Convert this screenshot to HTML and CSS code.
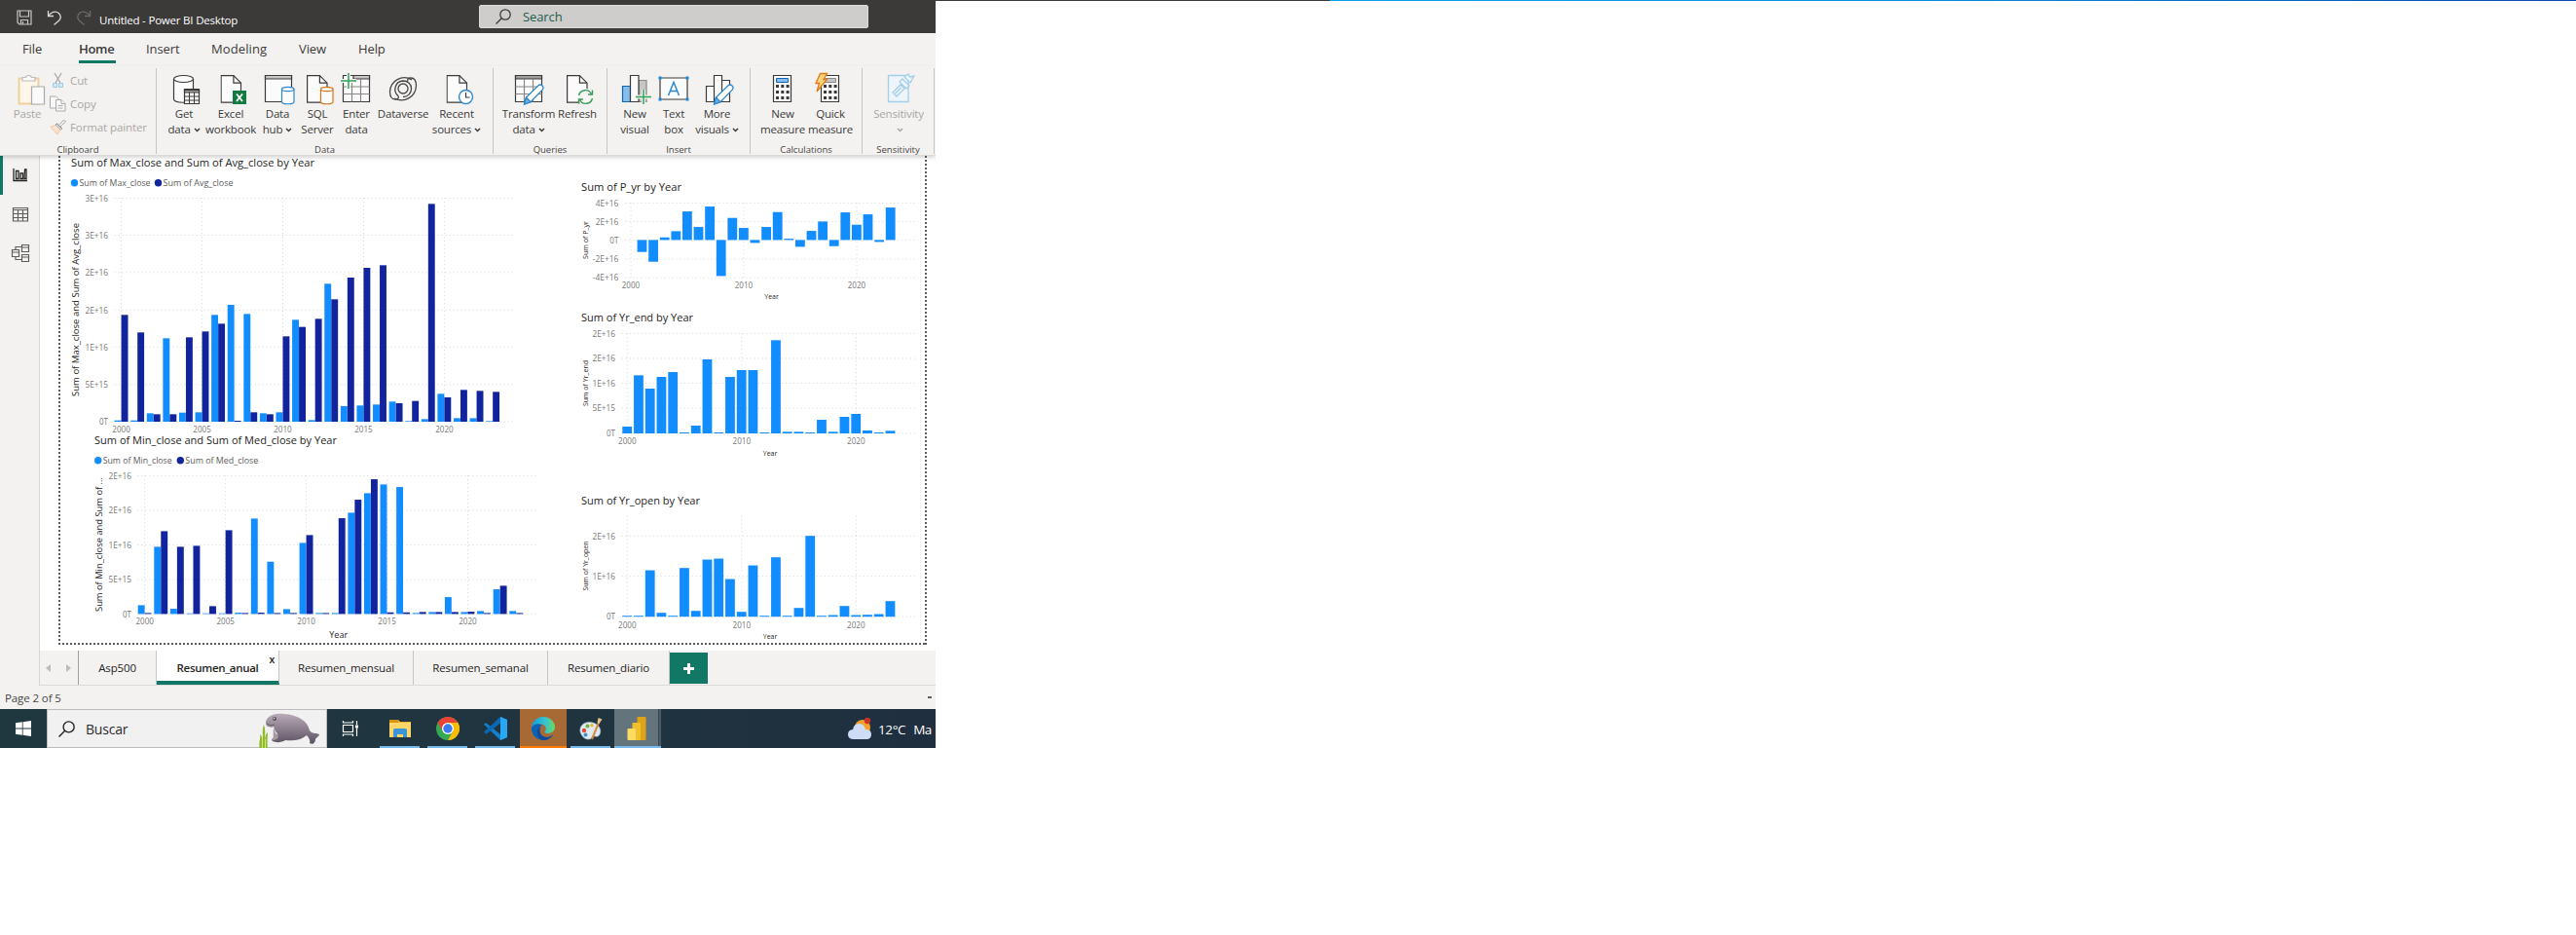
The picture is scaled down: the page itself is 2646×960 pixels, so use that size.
FILE: index.html
```html
<!DOCTYPE html>
<html lang="en">
<head>
<meta charset="utf-8">
<title>Untitled - Power BI Desktop</title>
<link rel="stylesheet" href="styles.css">
</head>
<body>
<div class="second-edge"><i class="edge-dark"></i><i class="edge-blue"></i></div>
<svg width="0" height="0" class="defs">
  <defs>
    <symbol id="chev" viewBox="0 0 7 5"><path d="M1 1l2.500 2.500L6 1" fill="none" stroke="currentColor" stroke-width="1.500"/></symbol>
    <symbol id="page" viewBox="0 0 22 29"><path d="M.6.6h12.800l7.600 7.600v19.900H.6z" fill="#fbfbfb" stroke="#3b3a39" stroke-width="1.200"/><path d="M13.400.6v7.600H21" fill="none" stroke="#3b3a39" stroke-width="1.200"/></symbol>
    <symbol id="pencil" viewBox="0 0 22 22"><path d="M1 21l2-7L15.500 1.700q2-1.500 4 .2t.2 4.200L7.500 18.800z" fill="#fff" stroke="#2b88d0" stroke-width="1.300"/><path d="M1 21l2-7 4.500 4.800z" fill="#69afe5" stroke="#2b88d0"/></symbol>
  </defs>
</svg>
<div class="app">
  <header class="titlebar">
    <svg class="tb-icon" width="16" height="16" viewBox="0 0 16 16" fill="none" stroke="#c8c6c4" stroke-width="1.200"><path d="M1 1h14v14H3l-2-2zM3.500 1v6h9V1M4.500 15v-4.500h7V15M6.500 12v3"/></svg>
    <svg class="tb-icon undo" width="16" height="16" viewBox="0 0 16 16" fill="none" stroke="#d8d6d4" stroke-width="1.300"><path d="M1.500 1v5.500H7M1.500 6.500C4 2.500 9 .5 12.300 3.500c3 3 2.200 5.500.4 7.500L7.500 15.500"/></svg>
    <svg class="tb-icon redo" width="16" height="16" viewBox="0 0 16 16" fill="none" stroke="#6c6a68" stroke-width="1.300"><path d="M14.500 1v5.500H9M14.500 6.500C12 2.500 7 .5 3.700 3.500c-3 3-2.200 5.500-.4 7.500L8.500 15.500"/></svg>
    <span class="app-title">Untitled - Power BI Desktop</span>
    <div class="search"><svg width="16" height="16" viewBox="0 0 16 16" fill="none" stroke="#3b3a39" stroke-width="1.300"><circle cx="10" cy="6" r="5.200"/><path d="M6.300 9.700L.5 15.500"/></svg><span>Search</span></div>
  </header>

  <nav class="menu"><span class="m1">File</span><span class="m2 on">Home</span><span class="m3">Insert</span><span class="m4">Modeling</span><span class="m5">View</span><span class="m6">Help</span></nav>

  <section class="ribbon">
    <div class="group g-clip">
      <div class="tools">
        <div class="btn dim b-paste">
          <svg width="36" height="36" viewBox="0 0 36 36"><path d="M7.500 6.500h20v26h-20z" fill="#fdf6e9" stroke="#f1cf9c" stroke-width="2"/><path d="M11 9V5.500h3.500Q15 3.500 17.500 3.500T20.500 5.500H24V9z" fill="#fafafa" stroke="#bbb" stroke-width="1.200"/><path d="M20.500 15h13v18h-13z" fill="#fafafa" stroke="#aaa" stroke-width="1.200"/></svg>
          <span>Paste</span>
        </div>
        <div class="clip-list">
          <div><svg width="17" height="17" viewBox="0 0 17 17" fill="none"><path d="M5 1l6.500 11M12 1L5.500 12" stroke="#a5a5a5" stroke-width="1.200"/><path d="M3.500 11.500h4v4h-4zM9.500 11.500h4v4h-4z" stroke="#9ccbe8" fill="#d7eaf6"/></svg><span>Cut</span></div>
          <div><svg width="17" height="17" viewBox="0 0 17 17" fill="#f8f8f8" stroke="#aaa"><path d="M.5 1h6l3 3v9h-9z"/><path d="M6.500 4.500h5.500l4 4V16H6.500z"/><path d="M12 4.500v4h4M8.500 10.500h5M8.500 13h5"/></svg><span>Copy</span></div>
          <div><svg width="17" height="17" viewBox="0 0 17 17"><path d="M1 8.500l7 7.500 3-6-4-4z" fill="#fbe3cf" stroke="#efc29c"/><path d="M7 5l5 5M9 7l2-2 3.500-4 2 2-4 3.500-2 2M6 6l5.500 5.500 1.500-1.500L7.500 4.500z" fill="#f5f5f5" stroke="#a5a5a5"/></svg><span>Format painter</span></div>
        </div>
      </div>
      <div class="glabel">Clipboard</div>
    </div>

    <div class="group g-data">
      <div class="tools">
        <div class="btn w48"><svg width="36" height="36" viewBox="0 0 36 36" fill="#fbfbfb" stroke="#3b3a39" stroke-width="1.200"><path d="M7.500 7v20.500c0 5 20 5 20 0V7"/><ellipse cx="17.500" cy="7" rx="10" ry="3.500"/><path d="M18.500 17.500h15v15h-15z"/><path d="M18.500 18.500h15v2.500h-15z" fill="#a19f9d"/><path d="M23.500 21v11.500M28.500 21v11.500M18.500 25h15M18.500 29h15" stroke-width="1"/></svg><span>Get</span><span>data<svg class="chev"><use href="#chev"/></svg></span></div>
        <div class="btn w48"><svg width="36" height="36" viewBox="0 0 36 36"><use href="#page" x="7.500" y="3" width="22" height="29"/><path d="M20 19h14v14H20z" fill="#107c41"/><path d="M24 22.500l6 7.500M30 22.500L24 30" stroke="#fff" stroke-width="1.800"/></svg><span>Excel</span><span>workbook</span></div>
        <div class="btn w48"><svg width="36" height="36" viewBox="0 0 36 36" fill="#fbfbfb" stroke="#3b3a39" stroke-width="1.200"><path d="M5.500 3.500h27v27h-27z"/><path d="M5.500 3.500h27V7h-27z" fill="#c8c6c4"/><g stroke="#2b88d0"><path d="M22.500 17.500v13c0 3 12.500 3 12.500 0v-13"/><ellipse cx="28.750" cy="17.500" rx="6.250" ry="2.200"/></g></svg><span>Data</span><span>hub<svg class="chev"><use href="#chev"/></svg></span></div>
        <div class="btn w34"><svg width="36" height="36" viewBox="0 0 36 36"><use href="#page" x="7" y="3" width="22" height="29"/><g fill="#fbfbfb" stroke="#d8741d" stroke-width="1.200"><path d="M21.500 17.500v13c0 3 12.500 3 12.500 0v-13"/><ellipse cx="27.750" cy="17.500" rx="6.250" ry="2.200"/></g></svg><span>SQL</span><span>Server</span></div>
        <div class="btn w46"><svg width="36" height="36" viewBox="0 0 36 36" fill="#fbfbfb" stroke="#3b3a39" stroke-width="1.200"><path d="M4.500 3.500h27v27h-27z"/><path d="M15 3.500h16.500V7H15z" fill="#c8c6c4"/><path d="M13.500 7v23.500M22.500 7v23.500M4.500 15h27M4.500 22.500h27" stroke="#8a8886"/><path d="M2 9h16M10 1v16" stroke="#f3f2f1" stroke-width="4"/><path d="M2 9h16M10 1v16" stroke="#2fa35a" stroke-width="1.500"/></svg><span>Enter</span><span>data</span></div>
        <div class="btn w50"><svg width="36" height="36" viewBox="0 0 36 36" fill="none" stroke="#484644" stroke-width="1.300"><circle cx="18" cy="17" r="5"/><path d="M27 8C17 2 5 9 4.500 20c0 5 2 8 5.500 8 3 0 4-2 3-3.500-6-5-3-15 5-15.500 5 0 8.500 3.500 8.500 8 0 5-4 8.500-8.500 8.500"/><path d="M9 27c10 5 22-1 22.500-13 0-5-2-8-5.500-8-3 0-4 2-3 3.500"/></svg><span>Dataverse</span></div>
        <div class="btn w60"><svg width="36" height="36" viewBox="0 0 36 36"><use href="#page" x="7.500" y="3" width="22" height="29"/><circle cx="27.500" cy="25.500" r="7" fill="#fff" stroke="#2b88d0" stroke-width="1.400"/><path d="M27.500 21v5h4" fill="none" stroke="#3b3a39" stroke-width="1.200"/></svg><span>Recent</span><span>sources<svg class="chev"><use href="#chev"/></svg></span></div>
      </div>
      <div class="glabel">Data</div>
    </div>

    <div class="group g-query">
      <div class="tools">
        <div class="btn w54"><svg width="36" height="36" viewBox="0 0 36 36" fill="#fbfbfb" stroke="#3b3a39" stroke-width="1.200"><path d="M4.500 3.500h27v27h-27z"/><path d="M4.500 3.500h27V7h-27z" fill="#a19f9d"/><path d="M13.500 7v23.500M22.500 7v23.500M4.500 15h27M4.500 22.500h27" stroke="#8a8886"/><use href="#pencil" x="12.500" y="12" width="22" height="22"/></svg><span>Transform</span><span>data<svg class="chev"><use href="#chev"/></svg></span></div>
        <div class="btn w46"><svg width="36" height="36" viewBox="0 0 36 36"><use href="#page" x="7" y="3" width="22" height="29"/><circle cx="26.500" cy="25.500" r="8.500" fill="#f6f6f5"/><path d="M19.500 24c1.500-6 10-7.500 13-1.500M33.500 18.500v4.500H29M33.500 27c-1.500 6-10 7.500-13 1.500M19.500 32.500V28H24" fill="none" stroke="#3a9b57" stroke-width="1.400"/></svg><span>Refresh</span></div>
      </div>
      <div class="glabel">Queries</div>
    </div>

    <div class="group g-insert">
      <div class="tools">
        <div class="btn w42"><svg width="36" height="36" viewBox="0 0 36 36" fill="#fbfbfb" stroke="#3b3a39" stroke-width="1.200"><path d="M5.500 14.500h8v16h-8z" fill="#83beec" stroke="#1267b4"/><path d="M22 8.500h8v22h-8z" fill="#c8c6c4" stroke="#8a8886"/><path d="M13.500 3.500h8.500v27h-8.500z"/><path d="M19 25.500h16M27 18v15" stroke="#f3f2f1" stroke-width="4"/><path d="M19 25.500h16M27 18v15" stroke="#2fa35a" stroke-width="1.500"/></svg><span>New</span><span>visual</span></div>
        <div class="btn w38"><svg width="36" height="36" viewBox="0 0 36 36"><path d="M4 6h28v22H4z" fill="#fbfbfb" stroke="#3b3a39" stroke-width="1.200"/><path d="M2.500 4.500h3v3h-3zM30.500 4.500h3v3h-3zM2.500 26.500h3v3h-3zM30.500 26.500h3v3h-3z" fill="#1a86d9"/><path d="M12.500 24L18 10.500 23.500 24M14.500 19.500h7" fill="none" stroke="#2b88d0" stroke-width="1.500"/></svg><span>Text</span><span>box</span></div>
        <div class="btn w51"><svg width="36" height="36" viewBox="0 0 36 36" fill="#fbfbfb" stroke="#3b3a39" stroke-width="1.200"><path d="M6.500 14.500h8v16h-8zM22.500 8.500h8v22h-8zM14.500 3.500h8v27h-8z"/><use href="#pencil" x="13.500" y="12" width="22" height="22"/></svg><span>More</span><span>visuals<svg class="chev"><use href="#chev"/></svg></span></div>
      </div>
      <div class="glabel">Insert</div>
    </div>

    <div class="group g-calc">
      <div class="tools">
        <div class="btn w46"><svg width="36" height="36" viewBox="0 0 36 36"><path d="M8.500 3.500h18v27h-18z" fill="#fbfbfb" stroke="#3b3a39" stroke-width="1.200"/><path d="M11.500 6.500h12v4h-12z" fill="#83beec" stroke="#1267b4"/><path d="M11 14.500h14M11 20.500h14M11 26.500h14" stroke="#3b3a39" stroke-width="3" stroke-dasharray="3 2.300"/></svg><span>New</span><span>measure</span></div>
        <div class="btn w52"><svg width="36" height="36" viewBox="0 0 36 36"><path d="M8.500 3.500h18v27h-18z" fill="#fbfbfb" stroke="#3b3a39" stroke-width="1.200"/><path d="M12.500 6.500h11v4h-11z" fill="#c8c6c4" stroke="#8a8886"/><path d="M11 14.500h14M11 20.500h14M11 26.500h14" stroke="#3b3a39" stroke-width="3" stroke-dasharray="3 2.300"/><path d="M7.500 1.500h7l-3.500 6h3.500L4 20l2.500-8.500H3z" fill="#fcd27b" stroke="#e07b18" stroke-width="1.300"/></svg><span>Quick</span><span>measure</span></div>
      </div>
      <div class="glabel">Calculations</div>
    </div>

    <div class="group g-sens">
      <div class="tools">
        <div class="btn w62 dim"><svg width="36" height="36" viewBox="0 0 36 36" fill="#eef5fa" stroke="#a3cfea" stroke-width="1.300"><path d="M7.500 3.500h20.500v27H7.500z"/><path d="M12 21l8-8 4 4-8 8zM14.500 22l6-6M19 10l3-3 7 7-3 3zM24 5l4-3 1.500 3L34 4l-4 7z"/></svg><span>Sensitivity</span><span><svg class="chev"><use href="#chev"/></svg></span></div>
      </div>
      <div class="glabel">Sensitivity</div>
    </div>
  </section>

  <div class="work">
    <aside class="rail">
      <div class="rail-item on"><svg width="18" height="18" viewBox="0 0 18 18" fill="none" stroke="#252423" stroke-width="1.300"><path d="M2 2v12.500h14M4.500 4.500h2.500v8H4.500zM9 7h2.500v5.500H9zM13.500 3H15v9.500h-2z"/></svg></div>
      <div class="rail-item"><svg width="18" height="18" viewBox="0 0 18 18" fill="none" stroke="#605e5c" stroke-width="1.200"><path d="M1.500 2.500h15v13.500h-15zM1.500 4.500h15M1.500 8.500h15M1.500 12.500h15M6.500 4.500V16M11.500 4.500V16"/></svg></div>
      <div class="rail-item"><svg width="20" height="20" viewBox="0 0 20 20" fill="none" stroke="#605e5c" stroke-width="1.200"><path d="M1.500 6.500h7v7h-7zM1.500 9h7M11.500 1.500h7v7h-7zM11.500 4h7M11.500 11.500h7v7h-7zM11.500 14h7M5 6.500V3.500h6.500M5 13.500v3h6.500"/></svg></div>
    </aside>
    <main class="stage">
      <div class="report" id="report"><i class="dots left"></i><i class="dots right"></i><i class="dots bottom"></i></div>
      <div class="pages">
        <div class="pager"><svg width="5" height="8" viewBox="0 0 5 8"><path d="M5 0v8L0 4z" fill="#bdbbb9"/></svg><svg width="5" height="8" viewBox="0 0 5 8"><path d="M0 0v8l5-4z" fill="#bdbbb9"/></svg></div>
        <div class="ptab p1">Asp500</div>
        <div class="ptab p2 on">Resumen_anual<span class="close">x</span></div>
        <div class="ptab p3">Resumen_mensual</div>
        <div class="ptab p4">Resumen_semanal</div>
        <div class="ptab p5">Resumen_diario</div>
        <div class="addpage"><svg width="11" height="11" viewBox="0 0 11 11"><path d="M0 5.500h11M5.500 0v11" stroke="#fff" stroke-width="3"/></svg></div>
      </div>
    </main>
  </div>
  <div class="status"><span>Page 2 of 5</span><i></i></div>

  <footer class="taskbar">
    <div class="start"><svg width="16" height="16" viewBox="0 0 16 16" fill="#fff"><path d="M0 2.200L6.800 1.300v6.200H0zM7.600 1.200L16 0v7.500H7.600zM0 8.400h6.800v6.300L0 13.800zM7.600 8.400H16V16l-8.400-1.200z"/></svg></div>
    <div class="tsearch">
      <svg width="17" height="17" viewBox="0 0 16 16" fill="none" stroke="#222" stroke-width="1.300"><circle cx="10" cy="6" r="5.200"/><path d="M6.300 9.700L.5 15.500"/></svg><span>Buscar</span>
      <svg class="manatee" width="64" height="38" viewBox="0 0 64 38">
        <defs><linearGradient id="mg" x1="0" y1="0" x2="0" y2="1"><stop offset="0" stop-color="#b9abb8"/><stop offset=".5" stop-color="#8c7f8d"/><stop offset="1" stop-color="#5b5262"/></linearGradient></defs>
        <path d="M7 10C9 3 17 1 26 2c14 1 24 7 26 17 3 4 6 2 10 4 0 2-3 3-4 5 0 4-3 6-6 4 1-3-1-6-3-8-6 5-15 6-22 5-4 3-14 3-14-1 3-1 5-3 6-6-3-2-3-5-4-7-3 2-9 0-8-5z" fill="url(#mg)"/>
        <path d="M15 16c1 4 2 7 5 8 0 4-3 5-7 5 3-3 1-8 2-13z" fill="#a497a6"/><circle cx="16" cy="7" r="2" fill="#554b58"/><circle cx="15.600" cy="6.600" r=".8" fill="#eee"/><path d="M8 12q4 3 8 1" fill="none" stroke="#6c6070"/>
        <path d="M1 38c-2-7 1-9 0-15 3 2 2 5 3 7 0-6-1-12 1-17 2 6 1 10 1 15 1-4 1-6 3-7 0 6-1 9 0 17z" fill="#8fbb2f"/><path d="M3.500 38V27M6.500 38V28" stroke="#d7e576"/>
      </svg>
    </div>
    <div class="task plain"><svg width="18" height="18" viewBox="0 0 18 18" fill="none" stroke="#fff" stroke-width="1.200"><path d="M1.500 1v2h10V1M1.500 5.500h10v7h-10zM1.500 17v-2h10v2M15.500 1v4M15.500 8.500V17"/><path d="M14 5.500h3v3h-3z" fill="#fff" stroke="none"/></svg></div>
    <div class="task run"><svg width="24" height="24" viewBox="0 0 24 24"><path d="M1 3h9l2 2h11v16H1z" fill="#f2b134"/><path d="M1 6h22v15H1z" fill="#ffd667"/><path d="M1 3h9v3H1z" fill="#d9940d"/><path d="M5 21v-7q0-2 2-2h10q2 0 2 2v7h-4v-3H9v3z" fill="#3d93d8"/></svg></div>
    <div class="task run"><svg width="24" height="24" viewBox="0 0 24 24"><circle cx="12" cy="12" r="12" fill="#34a853"/><path d="M1.600 6A12 12 0 0 1 22.400 6H12L6.800 15z" fill="#ea4335"/><path d="M22.400 6A12 12 0 0 1 12 24l5.200-9L12 6z" fill="#fbbc05"/><circle cx="12" cy="12" r="6" fill="#fff"/><circle cx="12" cy="12" r="4.700" fill="#3a7df0"/></svg></div>
    <div class="task run"><svg width="24" height="24" viewBox="0 0 24 24"><path d="M17 0l7 3v18l-7 3L2 9.500 0 8l2-2L17 18z" fill="#1280cf"/><path d="M17 0L0 15.500l2.500 2.300L17 6.500z" fill="#0a69b4"/><path d="M17 0l7 3v18l-7 3z" fill="#2aa7f2"/></svg></div>
    <div class="task run edge"><svg width="24" height="24" viewBox="0 0 24 24"><defs><linearGradient id="eg" x1="0" x2="1"><stop offset="0" stop-color="#169de0"/><stop offset=".6" stop-color="#35c4cf"/><stop offset="1" stop-color="#6bdc5c"/></linearGradient></defs><path d="M0 11C1 4 6 0 12 0c8 0 12 6 12 10.500S20 17 16.500 17C12 17 14 14 15 13 15 9 12 7.500 9 7.500S1 9 0 14z" fill="url(#eg)"/><path d="M0 11c2-4 8-5 11-2-5 1-5 9 2 11.500 4 1.200 7-.5 9-2C20 22 16 24 12 24 5 24-.5 18 0 11z" fill="#0c62b5"/><path d="M9.500 10C3 13 6 23 12 24c4 0 8-2 10-5.500-2 1.500-5 3.200-9 2-4.500-2-5.500-6.500-3.500-10.500z" fill="#134a96"/></svg></div>
    <div class="task run"><svg width="24" height="24" viewBox="0 0 24 24"><path d="M1 15C0 8 7 4 14 6s9 8 7 12-5 1-7 2-1 3-5 3-7-4-8-8z" fill="#dfe9f0" stroke="#9fc1d6" stroke-width=".7"/><circle cx="5" cy="14" r="2.200" fill="#de4a38"/><circle cx="8.500" cy="9.500" r="2" fill="#6cb33f"/><circle cx="13" cy="8.700" r="1.700" fill="#e9b72f"/><circle cx="6.500" cy="18.500" r="2" fill="#3d8fd5"/><path d="M13 23l7-17" stroke="#d8873a" stroke-width="2"/><path d="M18.500 6l1-5 4 1.500-3 4.500z" fill="#e4c28d"/></svg></div>
    <div class="task run pbi"><svg width="20" height="24" viewBox="0 0 20 24"><rect x="10.500" width="9" height="24" rx="1" fill="#e0a315"/><rect x="5.500" y="6" width="8.500" height="18" rx="1" fill="#f0bf2c"/><rect x=".5" y="12" width="8.500" height="12" rx="1" fill="#fbdb62"/></svg></div>
    <div class="weather"><svg width="26" height="24" viewBox="0 0 26 24"><circle cx="16" cy="11" r="8" fill="#f5a12b"/><circle cx="21" cy="4" r="3.200" fill="#c5332b"/><path d="M6 23q-5-.5-5-5t5-5q1-6 6.500-6T19 13q6 0 6 5t-5 5z" fill="#cfdcf5"/></svg><span class="deg">12°C</span><span>Ma</span></div>
  </footer>
</div>
<script src="charts.js"></script>
</body>
</html>
```
FILE: styles.css
```css
* { box-sizing: border-box; }
body { margin: 0; background: #fff; font-family: "Open Sans", "Noto Sans", sans-serif; color: #252423; overflow: hidden; position: relative; height: 960px; }
.defs { position: absolute; }
.second-edge { position: absolute; left: 961px; right: 0; top: 0; height: 1px; display: flex; }
.edge-dark { width: 405px; background: #3b3a39; }
.edge-blue { flex: 1; background: linear-gradient(90deg, #0aa0f2, #078de8 45%, #0b45b4); }
.app { width: 961px; height: 768px; display: flex; flex-direction: column; background: #f3f2f1; overflow: hidden; }

.titlebar { height: 34px; flex: none; background: #3b3a39; display: flex; align-items: center; padding-left: 17px; }
.tb-icon { margin-top: 2px; flex: none; }
.undo { margin-left: 15px; }
.redo { margin-left: 14px; }
.app-title { color: #fff; font-size: 11.5px; margin: 7px 0 0 8px; width: 390px; letter-spacing: -.2px; white-space: nowrap; }
.search { width: 400px; height: 24px; margin-top: -1px; background: #cfcdcb; border: 1px solid #dddbd9; border-radius: 2px; display: flex; align-items: center; padding-left: 16px; gap: 12px; color: #1a5e4e; font-size: 13px; letter-spacing: -.1px; }

.menu { height: 34px; flex: none; display: flex; padding-left: 23px; font-size: 13px; line-height: 33px; color: #3b3a39; }
.menu span { height: 31px; letter-spacing: -.1px; white-space: nowrap; }
.m1 { width: 58px; } .m2 { width: 38px; margin-right: 31px; } .m3 { width: 67px; } .m4 { width: 90px; } .m5 { width: 61px; }
.menu .m4 { letter-spacing: .1px; }
.menu .on { font-weight: 600; letter-spacing: -.3px; border-bottom: 3px solid #117865; }

.ribbon { height: 92px; flex: none; display: flex; padding-top: 2px; border-bottom: 1px solid #dcdad8; box-shadow: 0 2px 4px rgba(0,0,0,.16); position: relative; z-index: 2; background: #f3f2f1; }
.group { height: 88px; border-right: 1px solid #c8c6c4; display: flex; flex-direction: column; flex: none; }
.g-clip { width: 161px; } .g-data { width: 346px; } .g-query { width: 117px; }
.g-insert { width: 147px; } .g-calc { width: 115px; } .g-sens { width: 74px; }
.tools { display: flex; height: 77px; padding-top: 4px; flex: none; }
.g-data .tools { padding-left: 4px; } .g-query .tools { padding-left: 9px; } .g-insert .tools { padding-left: 7px; }
.g-calc .tools { padding-left: 10px; } .g-sens .tools { padding-left: 6px; }
.glabel { font-size: 9.500px; line-height: 13px; height: 13px; flex: none; text-align: center; color: #484644; }
.btn { display: flex; flex-direction: column; align-items: center; font-size: 11.5px; line-height: 16px; letter-spacing: -.18px; color: #3b3a39; flex: none; }
.btn > svg { display: block; margin-bottom: -1px; flex: none; overflow: visible; }
.btn span { white-space: nowrap; display: flex; align-items: center; height: 16px; }
.chev { width: 7px; height: 5px; margin-left: 3px; }
.dim { color: #a9a7a5; }
.w34 { width: 34px; } .w38 { width: 38px; } .w42 { width: 42px; } .w46 { width: 46px; } .w48 { width: 48px; } .w50 { width: 50px; }
.w51 { width: 51px; } .w52 { width: 52px; } .w54 { width: 54px; } .w60 { width: 60px; } .w62 { width: 62px; }
.b-paste { width: 42px; margin-left: 7px; }
.b-paste > svg { margin-left: 4px; }
.clip-list { margin: -4px 0 0 2px; display: flex; flex-direction: column; color: #a9a7a5; font-size: 11.5px; letter-spacing: -.1px; }
.clip-list div { height: 24px; display: flex; align-items: center; gap: 4px; white-space: nowrap; }

.work { height: 544px; flex: none; display: flex; }
.rail { width: 41px; border-right: 1px solid #d8d6d4; flex: none; }
.rail-item { height: 40px; display: flex; align-items: center; justify-content: center; border-left: 3px solid transparent; padding-right: 2px; }
.rail-item.on { border-left-color: #117865; }
.stage { flex: 1; display: flex; flex-direction: column; }
.report { height: 508px; background: #fff; position: relative; }
.dots { position: absolute; }
.dots.left, .dots.right { width: 2px; top: 0; height: 502px; background: repeating-linear-gradient(180deg, #605e5c 0 2px, transparent 2px 4px); }
.dots.left { left: 19px; } .dots.right { left: 909px; }
.dots.bottom { left: 19px; width: 892px; top: 500px; height: 2px; background: repeating-linear-gradient(90deg, #605e5c 0 2px, transparent 2px 4px); }
.visual { position: absolute; overflow: visible; }
.visual .ttl { font-size: 11px; fill: #252423; }
.visual .leg { font-size: 9.500px; fill: #605e5c; }
.visual .tick { font-size: 8.500px; fill: #777; }
.visual .axis { font-size: 9.500px; fill: #252423; }
.visual .axis.small { font-size: 8px; }
.visual .grid { stroke: #dedede; stroke-width: 1; stroke-dasharray: 1.300 2.700; }
.visual .light { fill: #118dff; } .visual .dark { fill: #12239e; }

.pages { height: 36px; display: flex; border-bottom: 1px solid #dcdad8; }
.pager { width: 40px; display: flex; justify-content: space-between; align-items: center; padding: 0 7px 0 6px; border-right: 1px solid #a19f9d; }
.ptab { border-right: 1px solid #c8c6c4; text-align: center; font-size: 11.500px; line-height: 36px; letter-spacing: -.15px; position: relative; white-space: nowrap; }
.p1 { width: 80px; } .p2 { width: 126px; } .p3 { width: 138px; } .p4 { width: 138px; } .p5 { width: 125px; }
.ptab.on { background: #fff; font-weight: 600; border-bottom: 4px solid #117865; letter-spacing: -.3px; }
.close { position: absolute; right: 4px; top: 1px; font-size: 10.500px; line-height: 16px; }
.addpage { width: 39px; height: 32px; margin-top: 2px; background: #117865; display: flex; align-items: center; justify-content: center; }

.status { height: 24px; flex: none; display: flex; align-items: center; justify-content: space-between; padding: 0 4px 0 5px; font-size: 11.500px; letter-spacing: -.1px; color: #484644; }
.status i { width: 4px; height: 2px; background: #605e5c; }

.taskbar { height: 40px; flex: none; background: linear-gradient(90deg, #1f3840, #20343f 60%, #1f2f40); display: flex; color: #fff; }
.start { width: 48px; display: flex; align-items: center; justify-content: center; flex: none; }
.tsearch { width: 288px; flex: none; background: #f2f1f1; border: 1px solid #bcbcbc; display: flex; align-items: center; padding-left: 11px; gap: 11px; color: #2b2b2b; font-size: 14px; letter-spacing: -.2px; position: relative; }
.tsearch span { padding-top: 1px; }
.manatee { position: absolute; left: 217px; top: 2px; }
.task { width: 49px; flex: none; display: flex; align-items: center; justify-content: center; position: relative; }
.task.plain { width: 50px; padding-right: 2px; }
.task.run::after { content: ""; position: absolute; left: 4px; right: 4px; bottom: 0; height: 2px; background: #76b9ed; }
.task.edge { background: #a86a35; margin-left: 1px; width: 48px; }
.task.edge::after, .task.pbi::after { left: 0; right: 0; }
.task.edge::after { background: #ff7a00; }
.task.pbi { background: linear-gradient(90deg, #64747c 45px, #33454e 45px 46px, #4a5b64 46px); width: 48px; padding-right: 3px; }
.weather { margin-left: auto; width: 91px; display: flex; align-items: center; font-size: 13.500px; letter-spacing: -.4px; flex: none; }
.weather span { padding-top: 1px; }
.weather .deg { margin: 0 8px 0 6px; }
```
FILE: charts.js
```js
const NS = 'http://www.w3.org/2000/svg';
// Report canvas origin inside the window.
const OX = 41, OY = 160;

function node(parent, tag, attrs, text) {
  const n = document.createElementNS(NS, tag);
  for (const k in attrs) n.setAttribute(k, attrs[k]);
  if (text) n.textContent = text;
  parent.appendChild(n);
  return n;
}

// Text squeezed to a fixed advance width.
function label(svg, cls, x, y, w, text, extra) {
  node(svg, 'text', Object.assign({ class: cls, x, y, textLength: w, lengthAdjust: 'spacingAndGlyphs' }, extra), text);
}

function draw(c) {
  const svg = document.createElementNS(NS, 'svg');
  svg.setAttribute('class', 'visual');
  const [vx, vy, vw, vh] = c.box;
  svg.setAttribute('width', vw);
  svg.setAttribute('height', vh);
  svg.setAttribute('viewBox', c.box.join(' '));
  svg.style.left = (vx - OX) + 'px';
  svg.style.top = (vy - OY) + 'px';
  document.getElementById('report').appendChild(svg);

  label(svg, 'ttl', c.title[1], c.title[2], c.title[3], c.title[0]);
  (c.legend || []).forEach(([t, cx, w, cls]) => {
    node(svg, 'circle', { cx, cy: c.legendY - 3.2, r: 3.7, class: cls });
    label(svg, 'leg', cx + 5, c.legendY, w, t);
  });
  c.ticks.forEach(([t, y]) => {
    node(svg, 'line', { class: 'grid', x1: c.x1, x2: c.x2, y1: y, y2: y });
    const w = t === '0T' ? 9 : (t[0] === '-' ? 26.5 : 23.5);
    label(svg, 'tick', c.tickX, y + 3.2, w, t, { 'text-anchor': 'end' });
  });
  for (let yr = 2000; yr <= 2020; yr += c.every) {
    const x = c.x0 + (yr - 2000) * c.step;
    node(svg, 'line', { class: 'grid', x1: x, x2: x, y1: c.top, y2: c.bottom });
    label(svg, 'tick', x, c.yearY, 18.5, String(yr), { 'text-anchor': 'middle' });
  }
  c.series.forEach((s) => {
    s.h.forEach((v, i) => {
      if (!v) return;
      const h = Math.abs(v) / 3;
      const y = v > 0 ? c.base - h : c.base;
      node(svg, 'rect', { class: s.cls, x: c.x0 + i * c.step + s.dx, y, width: s.w, height: h });
    });
  });
  const [t, ax, ay, aw, acls] = c.axis;
  label(svg, acls, ax, ay, aw, t, { 'text-anchor': 'middle', transform: `rotate(-90 ${ax} ${ay})` });
  if (c.year) label(svg, acls, c.year[0], c.year[1], c.year[2], 'Year', { 'text-anchor': 'middle' });
}

draw({
  box: [70, 160, 470, 286], title: ['Sum of Max_close and Sum of Avg_close by Year', 73, 171.3, 250],
  legend: [['Sum of Max_close', 76.5, 73, 'light'], ['Sum of Avg_close', 162.5, 72, 'dark']], legendY: 191,
  ticks: [['3E+16', 203.5], ['3E+16', 241.5], ['2E+16', 279.8], ['2E+16', 318.3], ['1E+16', 356.4], ['5E+15', 394.8], ['0T', 433]],
  x1: 117.5, x2: 527, tickX: 111, x0: 124.6, step: 16.59, every: 5, top: 203, bottom: 433, yearY: 444.3, base: 433,
  series: [
    { cls: 'light', dx: -7, w: 6.9, h: [4, 4, 26, 257, 28, 29, 329, 360, 332, 26, 29, 314, 5, 425, 48, 50, 53, 62, 2, 8, 86, 11, 11, 2] },
    { cls: 'dark', dx: 0, w: 6.9, h: [329, 275, 23, 23, 260, 278, 302, 3, 29, 23, 263, 292, 317, 377, 444, 474, 482, 57, 64, 671, 75, 98, 95, 92] }
  ],
  axis: ['Sum of Max_close and Sum of Avg_close', 81, 318, 178, 'axis']
});
draw({
  box: [90, 440, 470, 220], title: ['Sum of Min_close and Sum of Med_close by Year', 97, 456.3, 249],
  legend: [['Sum of Min_close', 100.7, 71, 'light'], ['Sum of Med_close', 185.3, 75, 'dark']], legendY: 476,
  ticks: [['2E+16', 488.4], ['2E+16', 524], ['1E+16', 559.4], ['5E+15', 595], ['0T', 630.4]],
  x1: 141, x2: 551, tickX: 135, x0: 148.7, step: 16.59, every: 5, top: 488, bottom: 630, yearY: 641.3, base: 630.4,
  series: [
    { cls: 'light', dx: -7, w: 6.9, h: [27, 207, 16, 2, 2, 2, 4, 294, 161, 15, 219, 3, 3, 312, 372, 399, 391, 3, 6, 52, 6, 9, 76, 9] },
    { cls: 'dark', dx: 0, w: 6.9, h: [3, 255, 207, 210, 24, 258, 3, 4, 3, 3, 243, 3, 295, 352, 415, 5, 5, 6, 6, 6, 7, 3, 87, 3] }
  ],
  axis: ['Sum of Min_close and Sum of ...', 105, 559, 138, 'axis'], year: [347.7, 655.3, 19]
});
draw({
  box: [590, 180, 360, 130], title: ['Sum of P_yr by Year', 597, 196.3, 103],
  ticks: [['4E+16', 208.4], ['2E+16', 227.4], ['0T', 246.4], ['-2E+16', 266], ['-4E+16', 285.2]],
  x1: 642, x2: 942.5, tickX: 635.3, x0: 648, step: 11.6, every: 10, top: 208, bottom: 285, yearY: 296.3, base: 246.4,
  series: [{ cls: 'light', dx: -5, w: 9.8, h: [0, -37, -67, 8, 27, 88, 40, 103, -111, 68, 37, -9, 40, 86, 4, -21, 28, 57, -19, 85, 47, 79, -6, 100] }],
  axis: ['Sum of P_yr', 603.5, 246.5, 39, 'axis small'], year: [792.5, 307.3, 14.5]
});
draw({
  box: [590, 315, 360, 160], title: ['Sum of Yr_end by Year', 597, 330.3, 115],
  ticks: [['2E+16', 342.4], ['2E+16', 368], ['1E+16', 393.4], ['5E+15', 419.2], ['0T', 445]],
  x1: 638.7, x2: 941, tickX: 632, x0: 644.3, step: 11.75, every: 10, top: 342, bottom: 445, yearY: 456.3, base: 445,
  series: [{ cls: 'light', dx: -5, w: 9.8, h: [21, 179, 138, 174, 189, 3, 24, 228, 3, 174, 195, 195, 3, 287, 5, 5, 3, 42, 5, 51, 60, 9, 3, 8] }],
  axis: ['Sum of Yr_end', 603.5, 393.5, 47, 'axis small'], year: [791, 467.5, 14.5]
});
draw({
  box: [590, 500, 360, 160], title: ['Sum of Yr_open by Year', 597, 518.3, 122],
  ticks: [['2E+16', 550.4], ['1E+16', 591.7], ['0T', 633.2]],
  x1: 638.7, x2: 941, tickX: 632, x0: 644.3, step: 11.75, every: 10, top: 529, bottom: 633, yearY: 644.5, base: 633.2,
  series: [{ cls: 'light', dx: -5, w: 9.8, h: [3, 3, 143, 12, 3, 150, 18, 176, 179, 116, 15, 158, 3, 183, 3, 27, 249, 3, 5, 33, 5, 6, 8, 48] }],
  axis: ['Sum of Yr_open', 603.5, 581, 51, 'axis small'], year: [791, 655.5, 14.5]
});
```
